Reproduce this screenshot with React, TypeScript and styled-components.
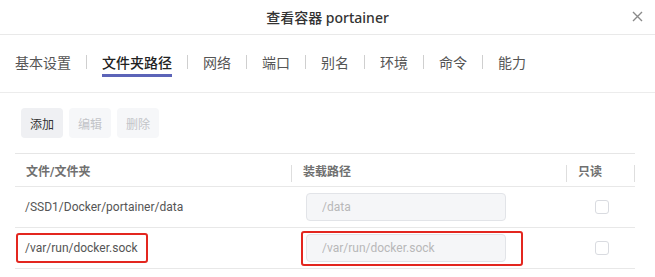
import React from "react";
import styled, { createGlobalStyle } from "styled-components";

const GlobalStyle = createGlobalStyle`
  html, body {
    margin: 0;
    padding: 0;
    background: #fff;
  }
  body {
    font-family: Roboto, "Noto Sans CJK SC", sans-serif;
    color: #333;
  }
`;

const Dialog = styled.div`
  width: 655px;
  height: 277px;
  overflow: hidden;
  background: #fff;
`;

const Header = styled.div`
  position: relative;
  height: 34px;
  border-bottom: 1px solid #e9e9e9;
  display: flex;
  align-items: center;
  justify-content: center;
`;

const Title = styled.div`
  font-family: "Noto Sans", "Noto Sans CJK SC", sans-serif;
  font-size: 14px;
  font-weight: 500;
  color: #333;
`;

const CloseButton = styled.button`
  position: absolute;
  right: 12px;
  top: 10px;
  width: 12px;
  height: 12px;
  padding: 0;
  border: none;
  background: transparent;
  display: flex;
  align-items: center;
  justify-content: center;
  cursor: pointer;
`;

const TabBar = styled.div`
  display: flex;
  align-items: flex-start;
  height: 58px;
  padding: 18px 0 0 15px;
  box-sizing: border-box;
  border-bottom: 1px solid #ececec;
`;

const Tab = styled.div<{ active?: boolean }>`
  font-size: 14px;
  line-height: 20px;
  padding-bottom: 1px;
  color: ${(p) => (p.active ? "#222" : "#555")};
  font-weight: ${(p) => (p.active ? 500 : 400)};
  border-bottom: 3px solid ${(p) => (p.active ? "#5c64b8" : "transparent")};
`;

const TabSep = styled.span`
  width: 1px;
  height: 14px;
  margin: 2px 15px 0;
  background: #cfcfcf;
`;

const Body = styled.div`
  padding: 15px 20px 0 15px;
`;

const Toolbar = styled.div`
  display: flex;
  gap: 6px;
  padding-left: 6px;
  margin-bottom: 15px;
`;

const ToolButton = styled.button<{ disabled?: boolean }>`
  height: 30px;
  width: 42px;
  padding: 0;
  border: none;
  border-radius: 4px;
  font-family: inherit;
  font-size: 12px;
  background: ${(p) => (p.disabled ? "#f6f7f9" : "#eff0f3")};
  color: ${(p) => (p.disabled ? "#c2c4c8" : "#333")};
`;

const Table = styled.div`
  width: 620px;
  border-top: 1px solid #e6e6e6;
`;

const Row = styled.div<{ head?: boolean }>`
  display: grid;
  grid-template-columns: 276px 275px 69px;
  height: ${(p) => (p.head ? "33px" : "41px")};
  border-bottom: 1px solid #e8e8e8;
  box-sizing: border-box;
`;

const HeadCell = styled.div<{ divider?: boolean }>`
  display: flex;
  align-items: center;
  padding-left: 11px;
  font-size: 12px;
  font-weight: 700;
  color: #707070;
  border-left: ${(p) => (p.divider ? "1px solid #dedede" : "none")};
  border-image: linear-gradient(
      to bottom,
      transparent 11px,
      #dedede 11px,
      #dedede 27px,
      transparent 27px
    )
    1;
`;

const LastHeadCell = styled(HeadCell)`
  border-right: 1px solid #dedede;
`;

const Cell = styled.div<{ center?: boolean }>`
  position: relative;
  display: flex;
  align-items: center;
  justify-content: ${(p) => (p.center ? "center" : "flex-start")};
  padding-left: ${(p) => (p.center ? "0" : "10px")};
  font-size: 12px;
  color: #555;
`;

const PathInput = styled.input`
  width: 200px;
  height: 28px;
  margin-left: 5px;
  box-sizing: border-box;
  padding: 0 15px;
  border: 1px solid #e2e4e8;
  border-radius: 4px;
  background: #f5f6f8;
  font-family: inherit;
  font-size: 12px;
  color: #b8b8b8;
  outline: none;
`;

const CheckBox = styled.span`
  width: 14px;
  height: 14px;
  box-sizing: border-box;
  border: 1px solid #d9dbe0;
  border-radius: 3px;
  background: #fff;
  margin-left: 2px;
`;

const Highlight = styled.span<{ l: number; t: number; w: number; h: number }>`
  position: absolute;
  left: ${(p) => p.l}px;
  top: ${(p) => p.t}px;
  width: ${(p) => p.w}px;
  height: ${(p) => p.h}px;
  box-sizing: border-box;
  border: 2px solid #e3261f;
  border-radius: 3px;
  pointer-events: none;
`;

const tabs = ["基本设置", "文件夹路径", "网络", "端口", "别名", "环境", "命令", "能力"];

const mounts = [
  { host: "/SSD1/Docker/portainer/data", target: "/data", marked: false },
  { host: "/var/run/docker.sock", target: "/var/run/docker.sock", marked: true },
];

export default function App() {
  return (
    <>
      <GlobalStyle />
      <Dialog>
        <Header>
          <Title>查看容器 portainer</Title>
          <CloseButton aria-label="close">
            <svg width="11" height="11" viewBox="0 0 11 11">
              <path d="M1 1L10 10M10 1L1 10" stroke="#8a8a8a" strokeWidth="1.4" />
            </svg>
          </CloseButton>
        </Header>
        <TabBar>
          {tabs.map((t, i) => (
            <React.Fragment key={t}>
              {i > 0 && <TabSep />}
              <Tab active={i === 1}>{t}</Tab>
            </React.Fragment>
          ))}
        </TabBar>
        <Body>
          <Toolbar>
            <ToolButton>添加</ToolButton>
            <ToolButton disabled>编辑</ToolButton>
            <ToolButton disabled>删除</ToolButton>
          </Toolbar>
          <Table>
            <Row head>
              <HeadCell>文件/文件夹</HeadCell>
              <HeadCell divider>装载路径</HeadCell>
              <LastHeadCell divider>只读</LastHeadCell>
            </Row>
            {mounts.map((m) => (
              <Row key={m.host}>
                <Cell>
                  {m.host}
                  {m.marked && <Highlight l={1} t={5} w={132} h={30} />}
                </Cell>
                <Cell>
                  <PathInput readOnly value={m.target} />
                  {m.marked && <Highlight l={10} t={3} w={222} h={35} />}
                </Cell>
                <Cell center>
                  <CheckBox />
                </Cell>
              </Row>
            ))}
          </Table>
        </Body>
      </Dialog>
    </>
  );
}
